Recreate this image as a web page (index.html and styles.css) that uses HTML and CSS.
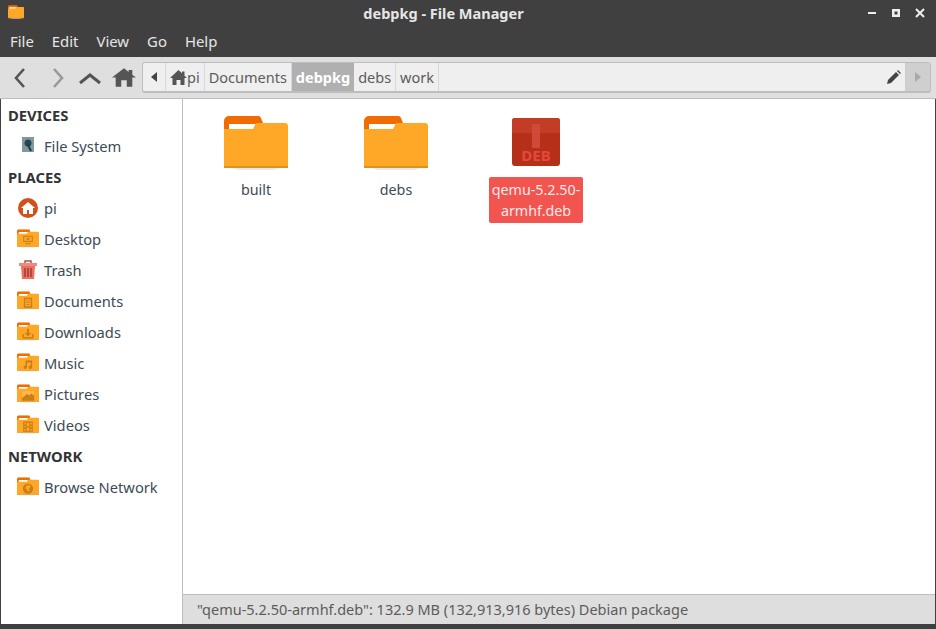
FILE: index.html
```html
<!DOCTYPE html>
<html lang="en">

<head>
  <meta charset="UTF-8">
  <title>debpkg - File Manager</title>
  <link rel="stylesheet" href="styles.css">
</head>

<body>
  <svg class="defs" width="0" height="0">
    <symbol id="folder" viewBox="0 0 64 54">
      <path d="M0 5a5 5 0 0 1 5-5h29a3 3 0 0 1 3 2l2 5v12H0z" fill="#f06c00" />
      <path d="M5 8h32v8H5z" fill="#fff" />
      <path d="M0 13h29l3-6h29a3 3 0 0 1 3 3v41H0z" fill="#ffa726" />
      <path d="M0 50h64v2H0z" fill="#d99420" />
      <path d="M8 52h48l-6 2H14z" fill="#e9e9e9" />
    </symbol>
  </svg>

  <div class="window">
    <header class="titlebar">
      <svg class="app-icon" width="16" height="16"><use href="#folder" /></svg>
      <span class="title">debpkg - File Manager</span>
      <div class="win-buttons">
        <svg width="10" height="10" viewBox="0 0 10 10"><path d="M1 4h8v2H1z" fill="#eee" /></svg>
        <svg width="10" height="10" viewBox="0 0 10 10"><path d="M1 1h8v8H1zM3.500 3.500v3h3v-3z" fill="#eee" fill-rule="evenodd" /></svg>
        <svg width="10" height="10" viewBox="0 0 10 10"><path d="M1 1l8 8M9 1l-8 8" stroke="#eee" stroke-width="2" /></svg>
      </div>
    </header>

    <nav class="menubar">
      <span>File</span>
      <span>Edit</span>
      <span>View</span>
      <span>Go</span>
      <span>Help</span>
    </nav>

    <div class="toolbar">
      <div class="tool-buttons">
        <svg width="14" height="22" viewBox="0 0 14 22"><path d="M11 2L3 11l8 9" fill="none" stroke="#555" stroke-width="2.6" /></svg>
        <svg class="next" width="14" height="22" viewBox="0 0 14 22"><path d="M3 2l8 9-8 9" fill="none" stroke="#999" stroke-width="2.6" /></svg>
        <svg class="up" width="24" height="14" viewBox="0 0 24 14"><path d="M2 12l10-8 10 8" fill="none" stroke="#555" stroke-width="3" /></svg>
        <svg class="home" width="24" height="19" viewBox="0 0 26 20"><path d="M13 0L0 10h4v10h6v-7h6v7h6V10h4l-4-3V2h-4v2z" fill="#555" /></svg>
      </div>
      <div class="pathbar">
        <div class="path-item path-back"><svg width="6" height="10" viewBox="0 0 6 10"><path d="M6 0v10L0 5z" fill="#444" /></svg></div>
        <div class="path-item path-pi">
          <svg width="17" height="15" viewBox="0 0 17 15"><path d="M8.500 0L0 8h2.500v7h4v-5h4v5h4V8H17l-2.500-2.300V1.500h-2.500v1.800z" fill="#555" /></svg>pi
        </div>
        <div class="path-item">Documents</div>
        <div class="path-item current">debpkg</div>
        <div class="path-item">debs</div>
        <div class="path-item">work</div>
        <div class="path-fill">
          <svg width="14" height="14" viewBox="0 0 14 14"><path d="M0 14l1-4 8-8 3 3-8 8zM10 1l1-1 3 3-1 1z" fill="#444" /></svg>
        </div>
        <div class="path-next"><svg width="6" height="10" viewBox="0 0 6 10"><path d="M0 0v10l6-5z" fill="#aaa" /></svg></div>
      </div>
    </div>

    <div class="main">
      <aside class="sidebar">
        <h3>DEVICES</h3>
        <div class="side-row">
          <svg class="side-icon" width="22" height="18" viewBox="0 0 22 18">
            <path d="M5 0h12v15H5z" fill="#84989c" />
            <circle cx="11" cy="6" r="3.500" fill="#1d4a58" />
            <path d="M11 8l3 6" stroke="#1d3a44" stroke-width="2" />
          </svg>
          File System
        </div>
        <h3>PLACES</h3>
        <div class="side-row">
          <svg class="side-icon" width="22" height="22" viewBox="0 0 22 22">
            <circle cx="11" cy="11" r="10" fill="#d2501a" />
            <path d="M11 5l-7 6h2v6h4v-4h2v4h4v-6h2z" fill="#fff" />
          </svg>
          pi
        </div>
        <div class="side-row">
          <svg class="side-icon" width="22" height="19" viewBox="0 0 64 54">
            <use href="#folder" />
            <path d="M18 19h28v18H18zM24 41h16v3H24z" fill="#c77f16" />
            <path d="M21 22h22v12H21z" fill="#ffa726" />
            <path d="M28 25h8v6h-8z" fill="#c77f16" />
          </svg>
          Desktop
        </div>
        <div class="side-row">
          <svg class="side-icon" width="22" height="20" viewBox="0 0 22 20">
            <path d="M8 3V1h6v2" fill="none" stroke="#a8564c" stroke-width="1.500" />
            <path d="M2 3h18v3H2z" fill="#f2897c" />
            <path d="M4 6h14l-1 13H5z" fill="#ec6f60" />
            <path d="M7 8h2v9H7zM10 8h2v9h-2zM13 8h2v9h-2z" fill="#b04a3e" />
          </svg>
          Trash
        </div>
        <div class="side-row">
          <svg class="side-icon" width="22" height="19" viewBox="0 0 64 54">
            <use href="#folder" />
            <path d="M20 19h24v29H20zM24 23v21h16V23zM27 27h10v2H27zM27 32h10v2H27zM27 37h10v2H27z" fill="#c77f16" fill-rule="evenodd" />
          </svg>
          Documents
        </div>
        <div class="side-row">
          <svg class="side-icon" width="22" height="19" viewBox="0 0 64 54">
            <use href="#folder" />
            <path d="M29 19h6v12h7L32 41 22 31h7zM16 34h4v9h24v-9h4v13H16z" fill="#c77f16" />
          </svg>
          Downloads
        </div>
        <div class="side-row">
          <svg class="side-icon" width="22" height="19" viewBox="0 0 64 54">
            <use href="#folder" />
            <path d="M25 21h19v20a5 5 0 1 1-4-5V27H29v14a5 5 0 1 1-4-5z" fill="#c77f16" />
          </svg>
          Music
        </div>
        <div class="side-row">
          <svg class="side-icon" width="22" height="19" viewBox="0 0 64 54">
            <use href="#folder" />
            <path d="M14 20h36v28H14z" fill="#c77f16" />
            <path d="M14 20h36v14l-8-7-7 6-5-5-16 13z" fill="#ffb74d" />
          </svg>
          Pictures
        </div>
        <div class="side-row">
          <svg class="side-icon" width="22" height="19" viewBox="0 0 64 54">
            <use href="#folder" />
            <path d="M18 18h28v30H18zM21 22v5h4v-5zM21 31v5h4v-5zM21 40v5h4v-5zM39 22v5h4v-5zM39 31v5h4v-5zM39 40v5h4v-5zM28 22v10h8V22zM28 36v9h8v-9z" fill="#c77f16" fill-rule="evenodd" />
          </svg>
          Videos
        </div>
        <h3>NETWORK</h3>
        <div class="side-row">
          <svg class="side-icon" width="22" height="19" viewBox="0 0 64 54">
            <use href="#folder" />
            <circle cx="32" cy="33" r="15" fill="#c77f16" />
            <path d="M30 23h9v6l-5 3 3 6-5 5-3-8-5-2 2-6z" fill="#ffa726" />
          </svg>
          Browse Network
        </div>
      </aside>

      <div class="content">
        <div class="files">
          <div class="file">
            <svg class="file-icon" width="64" height="54"><use href="#folder" /></svg>
            <span class="file-name">built</span>
          </div>
          <div class="file">
            <svg class="file-icon" width="64" height="54"><use href="#folder" /></svg>
            <span class="file-name">debs</span>
          </div>
          <div class="file selected">
            <svg class="file-icon deb-icon" width="48" height="48" viewBox="0 0 48 48">
              <rect width="48" height="48" rx="3" fill="#b53019" />
              <path d="M3 0h42a3 3 0 0 1 3 3v12H0V3a3 3 0 0 1 3-3z" fill="#c33d26" />
              <path d="M20 6h8v24h-8z" fill="#d14a38" />
              <text x="24" y="43" text-anchor="middle" class="deb-label">DEB</text>
            </svg>
            <span class="file-name">qemu-5.2.50-armhf.deb</span>
          </div>
        </div>
        <footer class="statusbar">"qemu-5.2.50-armhf.deb": 132.9 MB (132,913,916 bytes) Debian package</footer>
      </div>
    </div>
  </div>
</body>

</html>
```

FILE: styles.css
```css
html,
body {
  height: 100%;
}

body {
  margin: 0;
  overflow: hidden;
  background-color: #404040;
  font-family: "Noto Sans", sans-serif;
  font-size: 14.5px;
  color: #3d4a55;
}

.defs {
  display: block;
  height: 0;
}

.window {
  display: flex;
  flex-direction: column;
  height: 629px;
  padding: 0 1px 5px 1px;
  box-sizing: border-box;
}

.titlebar {
  display: flex;
  align-items: center;
  justify-content: center;
  position: relative;
  height: 27px;
  flex: none;
  padding: 0 49px 1px 0;
  box-sizing: border-box;
  color: #e6e6e6;
  font-weight: 700;
}

.app-icon {
  position: absolute;
  left: 7px;
  top: 4px;
}

.win-buttons {
  position: absolute;
  right: 10px;
  top: 8px;
  display: flex;
  gap: 14px;
}

.menubar {
  display: flex;
  gap: 18px;
  align-items: center;
  height: 30px;
  flex: none;
  padding: 0 0 2px 9px;
  box-sizing: border-box;
  font-size: 14.9px;
  color: #e6e6e6;
}

.toolbar {
  display: flex;
  align-items: center;
  height: 42px;
  flex: none;
  background-color: #dfdfdf;
  border-bottom: 1px solid #bcbcbc;
  margin: 0 -1px;
  padding: 0 5px 0 0;
  box-sizing: border-box;
}

.tool-buttons {
  display: flex;
  align-items: center;
  width: 142px;
  flex: none;
  padding-left: 13px;
  box-sizing: border-box;
}

.next {
  margin-left: 24px;
}

.up {
  margin-left: 13px;
}

.home {
  margin-left: 10px;
}

.pathbar {
  display: flex;
  flex: 1;
  height: 31px;
  background-color: #efefef;
  border: 1px solid #bdbdbd;
  border-bottom-width: 2px;
  border-radius: 3px;
  box-sizing: border-box;
  color: #5c5c5c;
}

.path-item {
  display: flex;
  align-items: center;
  padding: 0 4px;
  border-right: 1px solid #d8d8d8;
}

.path-back {
  width: 23px;
  box-sizing: border-box;
  justify-content: center;
  padding: 0;
}

.path-pi {
  padding: 0 4px;
}

.current {
  background-color: #b0b0b0;
  color: #fff;
  font-weight: 700;
  border-right: 0;
}

.path-fill {
  display: flex;
  align-items: center;
  justify-content: flex-end;
  flex: 1;
  padding-right: 4px;
}

.path-next {
  display: flex;
  align-items: center;
  justify-content: center;
  width: 25px;
  background-color: #cfcfcf;
}

.main {
  display: flex;
  flex: 1;
  min-height: 0;
}

.sidebar {
  width: 181px;
  flex: none;
  background-color: #fff;
  border-right: 1px solid #bdbdbd;
  padding-top: 7px;
  font-size: 14.7px;
}

.sidebar h3 {
  margin: 0;
  height: 31px;
  line-height: 19px;
  padding-left: 7px;
  font-size: 14.8px;
  font-weight: 700;
  color: #333;
}

.side-row {
  display: flex;
  align-items: center;
  height: 31px;
  margin-top: -6px;
  margin-bottom: 6px;
  padding: 0 0 2px 16px;
  box-sizing: border-box;
}

.side-icon {
  flex: none;
  margin-right: 5px;
}

.content {
  display: flex;
  flex-direction: column;
  flex: 1;
  min-width: 0;
}

.files {
  display: flex;
  flex: 1;
  align-items: flex-start;
  background-color: #fff;
  padding: 17px 0 0 3px;
}

.file {
  display: flex;
  flex-direction: column;
  align-items: center;
  width: 140px;
  font-size: 14.3px;
}

.file-icon {
  display: block;
}

.deb-icon {
  margin-top: 2px;
  margin-bottom: 4px;
}

.deb-label {
  font-family: "Noto Sans", sans-serif;
  font-size: 15px;
  font-weight: 700;
  fill: #e5483c;
}

.file-name {
  margin-top: 9px;
  text-align: center;
  line-height: 21px;
}

.selected .file-name {
  width: 94px;
  margin-top: 7px;
  padding: 2px 0;
  background-color: #f25550;
  border-radius: 2px;
  color: #fde8e8;
  overflow-wrap: anywhere;
}

.statusbar {
  height: 30px;
  flex: none;
  line-height: 29px;
  padding-left: 14px;
  background-color: #dedede;
  border-top: 1px solid #bdbdbd;
  box-sizing: border-box;
  color: #5c5c5c;
}
```
